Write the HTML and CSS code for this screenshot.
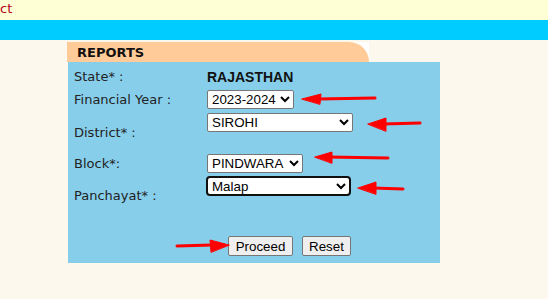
FILE: index.html
```html
<!DOCTYPE html>
<html lang="en">
<head>
    <meta charset="UTF-8">
    <meta name="viewport" content="width=device-width, initial-scale=1.0">
    <title>Reports</title>
    <link rel="stylesheet" href="styles.css">
</head>
<body>
    <div class="ticker"><span class="ticker-text">ct</span></div>
    <div class="menubar"></div>

    <div class="report">
        <div class="report-tab">
            <div class="report-title">REPORTS</div>
        </div>
        <div class="report-panel">
            <div class="form-grid">
                <div class="lbl lbl-state">State* :</div>
                <div class="state-name">RAJASTHAN</div>

                <div class="lbl">Financial Year :</div>
                <div><select class="sel sel-year"><option>2023-2024</option></select></div>

                <div class="lbl lbl-tall">District* :</div>
                <div><select class="sel sel-district"><option>SIROHI</option></select></div>

                <div class="lbl">Block*:</div>
                <div><select class="sel sel-block"><option>PINDWARA</option></select></div>

                <div class="lbl lbl-tall">Panchayat* :</div>
                <div><select class="sel sel-panchayat"><option>Malap</option></select></div>
            </div>
            <div class="actions">
                <button class="btn">Proceed</button>
                <button class="btn">Reset</button>
            </div>
        </div>
    </div>

    <!-- red hand-drawn pointers -->
    <svg class="arrows" width="548" height="299" viewBox="0 0 548 299">
        <g fill="#f00" stroke="#f00" stroke-linecap="round">
            <line x1="375" y1="98" x2="318" y2="99" stroke-width="3"/>
            <polygon points="302,99 321,94 320,104" stroke-width="1"/>

            <line x1="420" y1="123" x2="383" y2="124" stroke-width="3"/>
            <polygon points="368,124 386,118 386,131" stroke-width="1"/>

            <line x1="388" y1="158" x2="328" y2="157" stroke-width="3"/>
            <polygon points="315,157 332,152 332,163" stroke-width="1"/>

            <line x1="403" y1="189" x2="373" y2="188" stroke-width="3"/>
            <polygon points="358,188 376,182 376,194" stroke-width="1"/>

            <line x1="177" y1="246" x2="212" y2="245" stroke-width="3"/>
            <polygon points="229,245 210,240 211,252" stroke-width="1"/>
        </g>
    </svg>
</body>
</html>
```

FILE: styles.css
```css
* {
    margin: 0;
    padding: 0;
    box-sizing: border-box;
}

body {
    font-family: "DejaVu Sans", Verdana, sans-serif;
    font-size: 13px;
    background-color: #fdf8ed;
    color: #222;
    position: relative;
    width: 548px;
    height: 299px;
    overflow: hidden;
}

.ticker {
    height: 20px;
    background: #ffffd6;
    line-height: 17px;
}

.ticker-text {
    color: #b0001a;
    font-size: 13px;
}

.menubar {
    height: 20px;
    background: #00ccff;
}

.report {
    margin-left: 67px;
    margin-top: 2px;
}

.report-tab {
    width: 302px;
    background: #fff;
}

.report-title {
    height: 20px;
    background: #ffcc99;
    border-top-right-radius: 20px;
    padding-left: 10px;
    line-height: 21px;
    font-weight: bold;
    color: #111;
}

.report-panel {
    margin-left: 1px;
    width: 372px;
    background: #87ceeb;
    padding: 6px 0 7px 0;
}

.form-grid {
    display: grid;
    grid-template-columns: 139px auto;
    grid-template-rows: 22px 23px 41px 22px 40px;
}

.lbl {
    padding-left: 6px;
    line-height: 20px;
}

.lbl-state {
    line-height: 18px;
}

.lbl-tall {
    line-height: 39px;
}

.state-name {
    font-family: "Liberation Sans", Arial, sans-serif;
    font-weight: bold;
    font-size: 14px;
    line-height: 18px;
    color: #111;
}

.sel {
    font-family: "Liberation Sans", Arial, sans-serif;
    font-size: 13.33px;
    height: 19px;
    color: #000;
    background: #fff;
    border: 1px solid #767676;
    border-radius: 2px;
}

.sel-year {
    width: 87px;
}

.sel-district {
    width: 146px;
}

.sel-block {
    width: 96px;
}

.sel-panchayat {
    width: 145px;
    height: 20px;
    margin-left: -1px;
    border: 2px solid #101010;
    border-radius: 4px;
}

.actions {
    margin-top: 20px;
    padding-left: 160px;
    display: flex;
    gap: 9px;
}

.btn {
    font-family: "Liberation Sans", Arial, sans-serif;
    font-size: 13.33px;
    height: 20px;
    width: 65px;
    padding: 0 6px;
    background: #efefef;
    color: #000;
    border: 1px solid #767676;
    border-radius: 2px;
}

.btn + .btn {
    width: 49px;
}

.arrows {
    position: absolute;
    left: 0;
    top: 0;
    pointer-events: none;
}
```
